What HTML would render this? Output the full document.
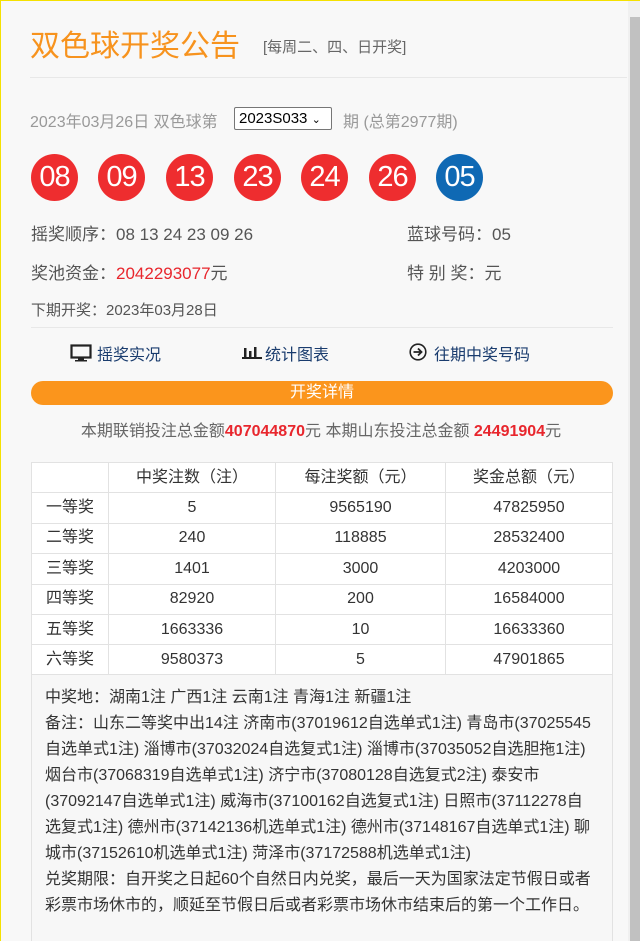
<!DOCTYPE html>
<html><head><meta charset="utf-8"><style>
*{margin:0;padding:0;box-sizing:border-box}
html,body{width:640px;height:941px;overflow:hidden}
body{background:#f8f8f8;font-family:"Liberation Sans","Noto Sans CJK SC",sans-serif;position:relative;border-top:1px solid #f5e100;border-left:1px solid #f5e100}
.abs{position:absolute;white-space:nowrap}
.sb{position:absolute;right:0;top:0;width:12px;height:941px;background:#f0f0f0}
.sb div{position:absolute;left:2px;top:16px;width:10px;height:925px;background:#c1c1c1}
.ball{position:absolute;top:153px;width:47px;height:47px;border-radius:50%;background:#ee2d2f;color:#fff;font-size:29px;line-height:47px;text-align:center;letter-spacing:-1px}
.t{font-size:16px;color:#555}
table{position:absolute;left:30px;top:461px;width:582px;border-collapse:collapse;background:#fff;font-size:16px;color:#333}
td{border:1px solid #e2e2e2;height:30.4px;text-align:center;vertical-align:middle;line-height:20px;padding:0}
td span{display:inline-block;vertical-align:middle;line-height:20px}
.notes{position:absolute;left:30px;top:673px;width:582px;height:268px;border:1px solid #e2e2e2;border-bottom:none;background:#f7f7f7;padding:10px 16px 0 13px;font-size:16px;line-height:26px;color:#333}
</style></head><body>
<div class="sb"><div></div></div>
<div class="abs" style="left:29px;top:20px;font-size:30px;color:#f7931e">双色球开奖公告</div>
<div class="abs" style="left:262px;top:35px;font-size:15px;color:#666">[每周二、四、日开奖]</div>
<div class="abs" style="left:29px;top:76px;width:597px;height:1px;background:#e8e8e8"></div>
<div class="abs" style="left:29px;top:107px;font-size:16px;color:#999">2023年03月26日 双色球第</div>
<div class="abs" style="left:233px;top:106px;width:98px;height:23px;border:1px solid #767676;border-radius:2px;background:#fff;font-size:15px;color:#000;padding-left:4px;line-height:21px">2023S033 <span style="font-size:11px">&#8964;</span></div>
<div class="abs" style="left:342px;top:107px;font-size:16px;color:#999">期 (总第2977期)</div>
<div class="ball" style="left:30px">08</div>
<div class="ball" style="left:97px">09</div>
<div class="ball" style="left:165px">13</div>
<div class="ball" style="left:233px">23</div>
<div class="ball" style="left:300px">24</div>
<div class="ball" style="left:368px">26</div>
<div class="ball" style="left:435px;background:#0f69b4">05</div>
<div class="abs t" style="left:30px;top:219px;font-size:17px">摇奖顺序：08 13 24 23 09 26</div>
<div class="abs t" style="left:406px;top:219px;font-size:17px">蓝球号码：05</div>
<div class="abs t" style="left:30px;top:258px;font-size:17px">奖池资金：<span style="color:#e8262d">2042293077</span>元</div>
<div class="abs t" style="left:406px;top:258px;font-size:17px">特 别 奖：元</div>
<div class="abs t" style="left:30px;top:298px;font-size:15px">下期开奖：2023年03月28日</div>
<div class="abs" style="left:30px;top:326px;width:582px;height:1px;background:#e8e8e8"></div>
<svg class="abs" style="left:69px;top:343px" width="22" height="18" viewBox="0 0 22 18"><rect x="1.5" y="1.5" width="19" height="12" fill="none" stroke="#222" stroke-width="2.2"/><rect x="8" y="14" width="6" height="2" fill="#222"/><rect x="5" y="16" width="12" height="1.5" fill="#222"/></svg>
<div class="abs" style="left:96px;top:340px;font-size:16px;color:#1a3c6e">摇奖实况</div>
<svg class="abs" style="left:241px;top:344px" width="20" height="14" viewBox="0 0 20 14"><rect x="0" y="12" width="20" height="2" fill="#222"/><rect x="2" y="3" width="2.5" height="9" fill="#222"/><rect x="7" y="6" width="2.5" height="6" fill="#222"/><rect x="12" y="2" width="2.5" height="10" fill="#222"/></svg>
<div class="abs" style="left:264px;top:340px;font-size:16px;color:#1a3c6e">统计图表</div>
<svg class="abs" style="left:408px;top:342px" width="18" height="18" viewBox="0 0 18 18"><circle cx="9" cy="9" r="7.8" fill="none" stroke="#222" stroke-width="1.6"/><path d="M4.5 9H12M9 5.5L12.5 9L9 12.5" fill="none" stroke="#222" stroke-width="1.8"/></svg>
<div class="abs" style="left:433px;top:340px;font-size:16px;color:#1a3c6e">往期中奖号码</div>
<div class="abs" style="left:30px;top:380px;width:582px;height:24px;border-radius:12px;background:#fb951c;color:#fff;text-align:center;font-size:16px;line-height:24px">开奖详情</div>
<div class="abs" style="left:0;width:640px;text-align:center;top:416px;font-size:16px;color:#666">本期联销投注总金额<b style="color:#e8262d">407044870</b>元 本期山东投注总金额 <b style="color:#e8262d">24491904</b>元</div>
<table>
<tr><td style="width:77px"></td><td style="width:167px"><span>中奖注数（注）</span></td><td style="width:170px"><span>每注奖额（元）</span></td><td><span>奖金总额（元）</span></td></tr>
<tr><td><span>一等奖</span></td><td><span>5</span></td><td><span>9565190</span></td><td><span>47825950</span></td></tr>
<tr><td><span>二等奖</span></td><td><span>240</span></td><td><span>118885</span></td><td><span>28532400</span></td></tr>
<tr><td><span>三等奖</span></td><td><span>1401</span></td><td><span>3000</span></td><td><span>4203000</span></td></tr>
<tr><td><span>四等奖</span></td><td><span>82920</span></td><td><span>200</span></td><td><span>16584000</span></td></tr>
<tr><td><span>五等奖</span></td><td><span>1663336</span></td><td><span>10</span></td><td><span>16633360</span></td></tr>
<tr><td><span>六等奖</span></td><td><span>9580373</span></td><td><span>5</span></td><td><span>47901865</span></td></tr>
</table>
<div class="notes">中奖地：湖南1注 广西1注 云南1注 青海1注 新疆1注<br>备注：山东二等奖中出14注 济南市(37019612自选单式1注) 青岛市(37025545自选单式1注) 淄博市(37032024自选复式1注) 淄博市(37035052自选胆拖1注) 烟台市(37068319自选单式1注) 济宁市(37080128自选复式2注) 泰安市(37092147自选单式1注) 威海市(37100162自选复式1注) 日照市(37112278自选复式1注) 德州市(37142136机选单式1注) 德州市(37148167自选单式1注) 聊城市(37152610机选单式1注) 菏泽市(37172588机选单式1注)<br>兑奖期限：自开奖之日起60个自然日内兑奖，最后一天为国家法定节假日或者彩票市场休市的，顺延至节假日后或者彩票市场休市结束后的第一个工作日。</div>
</body></html>
